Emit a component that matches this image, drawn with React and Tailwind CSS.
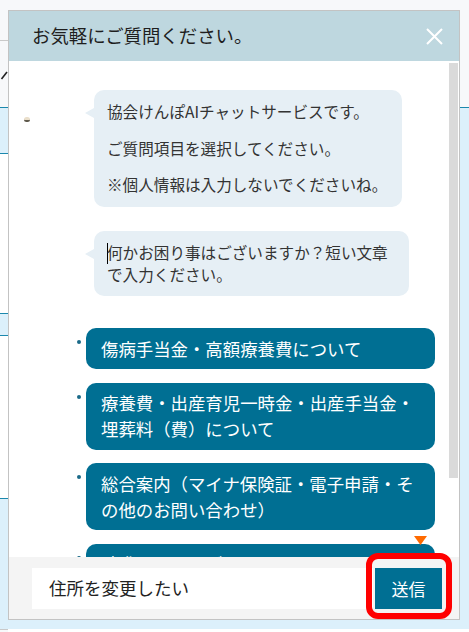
import React from "react";

const options = [
  "傷病手当金・高額療養費について",
  "療養費・出産育児一時金・出産手当金・埋葬料（費）について",
  "総合案内（マイナ保険証・電子申請・その他のお問い合わせ）",
  "請求するものがない",
];

function PageBackground() {
  return (
    <div className="flex h-[632px] w-full">
      {/* left strip of the page behind the chat window */}
      <div className="flex w-[8px] flex-col">
        <div className="h-[40px] bg-[#f7f8fa]" />
        <div className="h-px bg-[#c9c9c9]" />
        <div className="flex h-[66px] flex-col bg-[#f7f8fa] pt-[30px]">
          <svg width="8" height="9" viewBox="0 0 8 9">
            <line x1="1.5" y1="8" x2="7" y2="1" stroke="#222" strokeWidth="1.6" />
          </svg>
        </div>
        <div className="h-px bg-[#1b88ad]" />
        <div className="h-[45px] bg-[#dcf0fb]" />
        <div className="h-px bg-[#1b88ad]" />
        <div className="h-[159px] bg-white" />
        <div className="h-px bg-[#1b88ad]" />
        <div className="h-[21px] bg-[#dcf0fb]" />
        <div className="h-px bg-[#1b88ad]" />
        <div className="h-[162px] bg-white" />
        <div className="h-px bg-[#1b88ad]" />
        <div className="h-[130px] bg-[#dcf0fb]" />
        <div className="h-px bg-[#c9c9c9]" />
        <div className="flex-1 bg-[#f7f8fa]" />
      </div>
      <div className="flex flex-1 flex-col">
        <div className="h-[107px] bg-[#f7f8fa]" />
        <div className="h-px bg-[#1b88ad]" />
        <div className="h-[521px] bg-[#dcf0fb]" />
        <div className="flex-1 bg-white" />
      </div>
    </div>
  );
}

function Bubble({ children, width, avatar }) {
  return (
    <div className="flex pl-[15px]">
      <div className="w-[61px] shrink-0 pt-[27px]">
        {avatar && (
          <div className="h-[5px] w-[6px] rounded-full border-b-2 border-[#5f5a4c] bg-[#eadfcb]" />
        )}
      </div>
      <div className="relative">
        <div className="absolute left-0 top-[18px] h-0 w-0 border-y-[5px] border-r-[9px] border-y-transparent border-r-[#e6eff5]" />
        <div
          className={`ml-[9px] rounded-[10px] bg-[#e6eff5] px-[13px] py-[11px] text-[15.6px] leading-[21.5px] text-[#333] ${width}`}
        >
          {children}
        </div>
      </div>
    </div>
  );
}

export default function App() {
  return (
    <div className="relative h-[632px] w-full overflow-hidden font-['Noto_Sans_CJK_JP',sans-serif]">
      <PageBackground />

      {/* floating chat window */}
      <div className="absolute left-[8px] top-[10px] flex h-[610px] w-[452px] flex-col border border-[#c3c3c3] bg-white">
        <div className="flex h-[50px] shrink-0 items-center justify-between bg-[#bed7df] pl-[23px] pr-[16px]">
          <span className="text-[18.4px] text-[#1e1e1e]">お気軽にご質問ください。</span>
          <svg width="17" height="17" viewBox="0 0 17 17">
            <path d="M1 1 L16 16 M16 1 L1 16" stroke="#fff" strokeWidth="2" />
          </svg>
        </div>

        <div className="relative flex-1 overflow-hidden">
          <div className="flex flex-col pt-[29px]">
            <Bubble width="w-[308px]" avatar>
              <p>協会けんぽAIチャットサービスです。</p>
              <p className="mt-[15px]">ご質問項目を選択してください。</p>
              <p className="mt-[15px]">※個人情報は入力しないでくださいね。</p>
            </Bubble>
            <div className="mt-[24px]">
              <Bubble width="w-[315px]">
                <span className="-mr-px inline-block h-[21px] w-px bg-black align-[-5px]" />
                何かお困り事はございますか？短い文章で入力ください。
              </Bubble>
            </div>

            <ul className="mt-[32px] flex flex-col gap-[13.5px] pl-[68px]">
              {options.map((o) => (
                <li key={o} className="flex items-start">
                  <span className="mt-[12px] mr-[5px] h-[4px] w-[4px] shrink-0 rounded-full bg-[#1a6a88]" />
                  <button className="w-[349px] rounded-[10px] bg-[#006f93] px-[15px] py-[7.5px] text-left text-[17.4px] leading-[26px] text-white">
                    {o}
                  </button>
                </li>
              ))}
            </ul>
          </div>

          {/* scrollbar thumb */}
          <div className="absolute right-[1px] top-[2px] h-[415px] w-[9px] bg-[#dadada]" />
          {/* scroll-down marker */}
          <svg className="absolute left-[405px] top-[475px]" width="13" height="9" viewBox="0 0 13 9">
            <polygon points="0,0 13,0 6.5,9" fill="#ff6a00" />
          </svg>
        </div>

        <div className="flex h-[62px] shrink-0 items-start gap-[2px] bg-[#f4f4f4] pl-[23px] pr-[17px] pt-[11px]">
          <div className="flex h-[41px] flex-1 items-center bg-white pl-[17px] text-[17.5px] text-[#222]">
            住所を変更したい
          </div>
          <button className="h-[41px] w-[67px] bg-[#006f93] text-[17px] text-white">送信</button>
        </div>

        {/* red highlight around the send button */}
        <div className="absolute left-[357px] top-[542px] h-[66px] w-[86px] rounded-[12px] border-[6px] border-[#ff0000]" />
      </div>
    </div>
  );
}
